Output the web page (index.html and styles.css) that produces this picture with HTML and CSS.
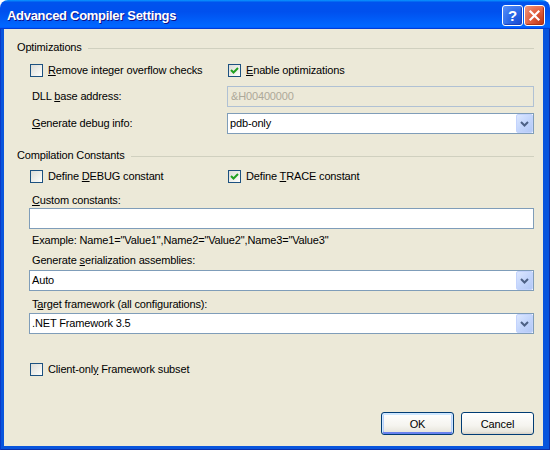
FILE: index.html
```html
<!DOCTYPE html>
<html>
<head>
<meta charset="utf-8">
<link rel="stylesheet" href="styles.css">
</head>
<body>
<div class="window">
  <div class="titlebar">
    <span class="title">Advanced Compiler Settings</span>
    <div class="tb-buttons">
      <div class="tb-btn help">?</div>
      <div class="tb-btn close">
        <svg width="19" height="19" viewBox="0 0 19 19"><path d="M5.5 5.5 L13.5 13.5 M13.5 5.5 L5.5 13.5" stroke="#fff" stroke-width="2.2" stroke-linecap="square" fill="none"/></svg>
      </div>
    </div>
  </div>
  <div class="frame">
    <div class="client">
      <div class="group-head head1"><span>Optimizations</span><div class="rule"></div></div>
      <div class="grid cbrow row-opt">
        <div class="cb"><span class="box"></span><span><u>R</u>emove integer overflow checks</span></div>
        <div class="cb col2"><span class="box"><svg width="11" height="11" viewBox="0 0 11 11"><path d="M2 5 L4.5 7.5 L9 3" stroke="#21A121" stroke-width="2" fill="none"/></svg></span><span><u>E</u>nable optimizations</span></div>
      </div>
      <div class="grid field-row row-dll">
        <span class="lbl">DLL <u>b</u>ase address:</span>
        <div class="textbox disabled">&amp;H00400000</div>
      </div>
      <div class="grid field-row row-dbg">
        <span class="lbl"><u>G</u>enerate debug info:</span>
        <div class="combo"><span class="val">pdb-only</span><span class="arrow"><svg width="15" height="17" viewBox="0 0 15 17"><path d="M4 7 L7.5 10.5 L11 7" stroke="#4D6185" stroke-width="2" fill="none"/></svg></span></div>
      </div>

      <div class="group-head head2"><span>Compilation Constants</span><div class="rule"></div></div>
      <div class="grid cbrow row-cc">
        <div class="cb"><span class="box"></span><span>Define <u>D</u>EBUG constant</span></div>
        <div class="cb col2"><span class="box"><svg width="11" height="11" viewBox="0 0 11 11"><path d="M2 5 L4.5 7.5 L9 3" stroke="#21A121" stroke-width="2" fill="none"/></svg></span><span>Define <u>T</u>RACE constant</span></div>
      </div>
      <div class="lbl sub lbl-custom"><u>C</u>ustom constants:</div>
      <div class="textbox sub tb-custom"></div>
      <div class="lbl sub lbl-example">Example: Name1="Value1",Name2="Value2",Name3="Value3"</div>
      <div class="lbl sub lbl-ser">Generate <u>s</u>erialization assemblies:</div>
      <div class="combo sub combo-ser"><span class="val">Auto</span><span class="arrow"><svg width="15" height="17" viewBox="0 0 15 17"><path d="M4 7 L7.5 10.5 L11 7" stroke="#4D6185" stroke-width="2" fill="none"/></svg></span></div>
      <div class="lbl sub lbl-target">T<u>a</u>rget framework (all configurations):</div>
      <div class="combo sub combo-target"><span class="val">.NET Framework 3.5</span><span class="arrow"><svg width="15" height="17" viewBox="0 0 15 17"><path d="M4 7 L7.5 10.5 L11 7" stroke="#4D6185" stroke-width="2" fill="none"/></svg></span></div>
      <div class="cb sub row-client"><span class="box"></span><span>Client-onl<u>y</u> Framework subset</span></div>

      <div class="buttons">
        <div class="btn default">OK</div>
        <div class="btn">Cancel</div>
      </div>
    </div>
  </div>
</div>
</body>
</html>
```
FILE: styles.css
```css
* { box-sizing: border-box; }
html, body { margin: 0; padding: 0; background: #ffffff; }
body {
  width: 550px;
  height: 450px;
  overflow: hidden;
  font-family: "Liberation Sans", Arial, sans-serif;
  font-size: 11px;
  letter-spacing: -0.15px;
  color: #000;
}
u { text-underline-offset: 1px; }

.window {
  width: 550px;
  height: 450px;
  display: flex;
  flex-direction: column;
}

.titlebar {
  height: 29px;
  flex: none;
  display: flex;
  align-items: center;
  padding: 0 5px 0 7px;
  border-radius: 8px 8px 0 0;
  background: linear-gradient(180deg, #0997ff, #0053ee 8%, #0050ee 40%, #0066ff 88%, #0066ff 93%, #005bff 95%, #003dd7 96%, #003dd7);
}
.title {
  flex: 1;
  color: #fff;
  font-weight: bold;
  font-size: 13px;
  letter-spacing: -0.3px;
  text-shadow: 1px 1px #0F1089;
  margin-top: 1px;
}
.tb-buttons {
  display: flex;
  gap: 1px;
  margin-top: 1px;
}
.tb-btn {
  width: 21px;
  height: 21px;
  border: 1px solid #fff;
  border-radius: 3px;
  display: flex;
  align-items: center;
  justify-content: center;
}
.help {
  background: radial-gradient(circle at 85% 85%, #1c4fd6 0, #2a68e8 45%, #5a92fa 100%);
  box-shadow: inset -1px -1px 1px #1b3fb8;
  color: #fff;
  font-weight: bold;
  font-size: 15px;
  letter-spacing: 0;
  line-height: 19px;
}
.close {
  background: radial-gradient(circle at 85% 85%, #c13b1c 0, #e2603f 50%, #f09a80 100%);
  box-shadow: inset -1px -1px 1px #a83016;
}

.frame {
  flex: 1;
  display: flex;
  background: #0855DD;
  padding: 0 7px 4px 4px;
  box-shadow: inset 1px 0 #0a3ac8, inset -1px 0 #0a2fa8, inset 0 -1px #0a2fa8;
}
.client {
  flex: 1;
  background: #ECE9D8;
  display: flex;
  flex-direction: column;
  padding: 0 9px 11px 13px;
}

.group-head {
  display: flex;
  align-items: center;
  height: 13px;
  line-height: 13px;
}
.group-head .rule {
  flex: 1;
  height: 1px;
  background: #D0D0BF;
  margin-left: 6px;
  margin-top: 1px;
}
.head1 { margin-top: 12px; }
.head2 { margin-top: 15px; }

.grid {
  display: grid;
  grid-template-columns: 198px 1fr;
  margin-left: 12px;
}
.sub { margin-left: 12px; }

.cb {
  display: flex;
  align-items: center;
  gap: 5px;
  height: 13px;
  line-height: 13px;
  padding-left: 1px;
}
.box {
  width: 13px;
  height: 13px;
  flex: none;
  border: 1px solid #1C5180;
  background: linear-gradient(135deg, #DCDCD7 0%, #F4F4F0 70%, #FFFFFF 100%);
  display: flex;
  align-items: center;
  justify-content: center;
}
.cbrow { height: 13px; }
.row-opt { margin-top: 10px; }
.row-cc { margin-top: 8px; }

.lbl {
  line-height: 13px;
  height: 13px;
  padding-left: 3px;
  white-space: nowrap;
}
.field-row {
  align-items: center;
  height: 21px;
}
.row-dll { margin-top: 9px; }
.row-dbg { margin-top: 6px; }

.textbox {
  height: 21px;
  border: 1px solid #7F9DB9;
  background: #fff;
  padding-left: 3px;
  line-height: 19px;
}
.textbox.disabled {
  background: #ECE9D8;
  border-color: #B0C1D4;
  color: #ACA899;
}

.combo {
  height: 21px;
  border: 1px solid #7F9DB9;
  background: #fff;
  display: flex;
  align-items: stretch;
}
.combo .val {
  flex: 1;
  padding-left: 2px;
  line-height: 19px;
}
.combo .arrow {
  width: 17px;
  flex: none;
  border: 1px solid #C3D3FD;
  border-radius: 2px;
  background: linear-gradient(135deg, #DCE7FF 0%, #C4D6FC 50%, #B3C8F5 100%);
  display: flex;
  align-items: center;
  justify-content: center;
}

.lbl-custom { margin-top: 11px; }
.tb-custom { margin-top: 1px; }
.lbl-example { margin-top: 5px; }
.lbl-ser { margin-top: 7px; }
.combo-ser { margin-top: 3px; }
.lbl-target { margin-top: 7px; }
.combo-target { margin-top: 2px; }
.row-client { margin-top: 29px; }

.buttons {
  margin-top: auto;
  display: flex;
  justify-content: flex-end;
  gap: 7px;
}
.btn {
  width: 73px;
  height: 23px;
  border: 1px solid #003C74;
  border-radius: 3px;
  background: linear-gradient(180deg, #FFFFFF 0%, #F5F4EF 60%, #E9E7DE 88%, #D6D0C5 100%);
  display: flex;
  align-items: center;
  justify-content: center;
}
.btn.default {
  box-shadow: inset 0 1px 0 1px #CEE7FF, inset 0 -1px 0 1px #6982EE, inset 1px 0 0 1px #B9D1F9, inset -1px 0 0 1px #B9D1F9;
}
```
